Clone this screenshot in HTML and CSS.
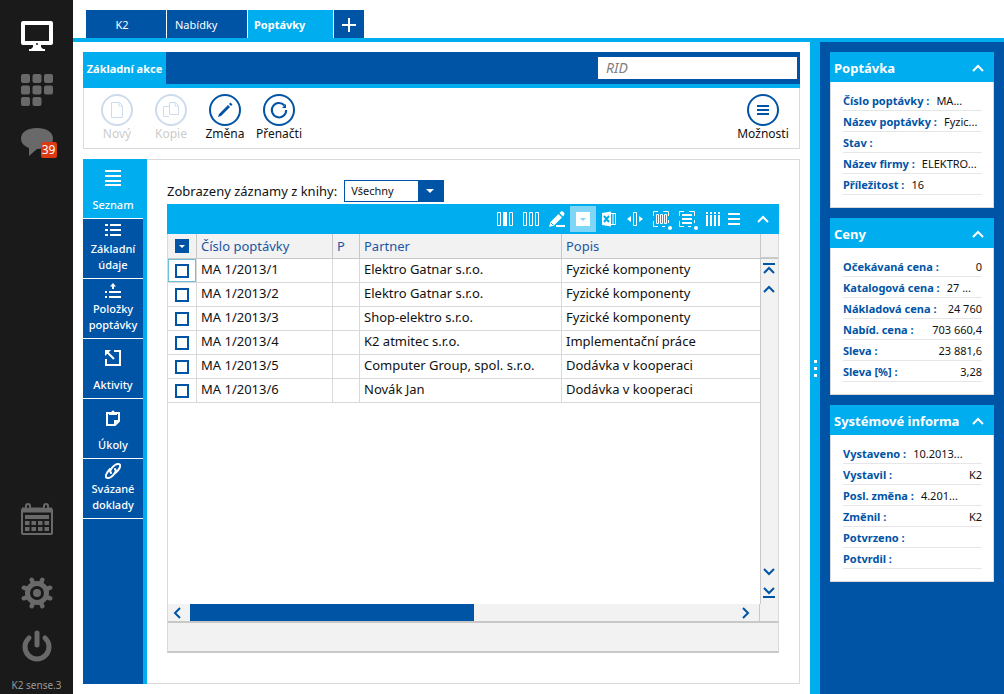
FILE: index.html
```html
<!DOCTYPE html>
<html lang="cs">
<head>
<meta charset="utf-8">
<title>K2 – Poptávky</title>
<link rel="stylesheet" href="styles.css">
</head>
<body>
<div class="app">
  <nav class="rail" aria-label="Hlavní panel">
    <a href="#" class="rail-link active" aria-label="Plocha">
      <svg width="32" height="32" viewBox="0 0 32 32"><path fill="currentColor" fill-rule="evenodd" d="M2 0h28a2 2 0 0 1 2 2v20a2 2 0 0 1-2 2H20v2l2 2h2v2H8v-2h2l2-2v-2H2a2 2 0 0 1-2-2V2a2 2 0 0 1 2-2zM4 4v16h24V4z"/><circle cx="16" cy="23" r="1" fill="#1a1a1a"/></svg>
    </a>
    <a href="#" class="rail-link" aria-label="Moduly">
      <svg width="32" height="32" viewBox="0 0 32 32" fill="currentColor"><rect width="9" height="9" rx="2"/><rect x="11.500" width="9" height="9" rx="2"/><rect x="23" width="9" height="9" rx="2"/><rect y="11.500" width="9" height="9" rx="2"/><rect x="11.500" y="11.500" width="9" height="9" rx="2"/><rect x="23" y="11.500" width="9" height="9" rx="2"/><rect y="23" width="9" height="9" rx="2"/><rect x="11.500" y="23" width="9" height="9" rx="2"/></svg>
    </a>
    <a href="#" class="rail-link" aria-label="Zprávy">
      <svg width="32" height="32" viewBox="0 0 32 32"><path fill="currentColor" d="M16 1c9 0 16 4 16 10.500S25 22 16 22l-8 7v-8C3 19 0 16 0 11.500 0 5 7 1 16 1z"/></svg>
      <span class="badge">39</span>
    </a>
    <a href="#" class="rail-link rail-calendar" aria-label="Kalendář">
      <svg width="32" height="32" viewBox="0 0 32 32" fill="none" stroke="currentColor" stroke-width="2"><rect x="1" y="6" width="30" height="25" rx="1"/><path stroke-width="5" d="M1 7h30"/><path stroke-width="4" d="M4 14h24"/><path stroke-width="4" stroke-dasharray="4.500 2" d="M4 20h24M4 26h24"/><path fill="#1a1a1a" d="M5 6V3a2 2 0 0 1 4 0v3zM23 6V3a2 2 0 0 1 4 0v3z"/></svg>
    </a>
    <a href="#" class="rail-link rail-gear" aria-label="Nastavení">
      <svg width="32" height="32" viewBox="0 0 32 32" fill="none" stroke="currentColor"><circle cx="16" cy="16" r="9.500" stroke-width="5"/><circle cx="16" cy="16" r="4" fill="currentColor" stroke="none"/><path stroke-width="4.500" stroke-linecap="round" d="M12.200 6.800l-1.500-4M19.800 6.800l1.500-4M25.200 12.200l4-1.500M25.200 19.800l4 1.500M19.800 25.200l1.500 4M12.200 25.200l-1.500 4M6.800 19.800l-4 1.500M6.800 12.200l-4-1.500"/></svg>
    </a>
    <a href="#" class="rail-link" aria-label="Odhlásit">
      <svg width="32" height="32" viewBox="0 0 32 32" fill="none" stroke="currentColor" stroke-width="5" stroke-linecap="round"><path d="M8 8a12 12 0 1 0 16 0M16 3v12"/></svg>
    </a>
    <span class="rail-version">K2 sense.3</span>
  </nav>

  <div class="workspace">
    <header class="tabs">
      <button class="tab tab-home">K2</button>
      <button class="tab">Nabídky</button>
      <button class="tab tab-active">Poptávky</button>
      <button class="tab tab-add" aria-label="Nová záložka"><svg width="14" height="14" viewBox="0 0 14 14"><path stroke="#fff" stroke-width="2" d="M7 0v14M0 7h14"/></svg></button>
    </header>

    <div class="body">
      <main class="main">
        <section class="ribbon">
          <div class="ribbon-head">
            <button class="ribbon-tab">Základní akce</button>
            <input class="rid" type="text" placeholder="RID" aria-label="RID">
          </div>
          <div class="actions">
            <button class="action" disabled><span class="disc"><svg width="28" height="28" viewBox="0 0 28 28"><path d="M8.500 6.500h8l3 3v12h-11zM16 7v3h3"/></svg></span>Nový</button>
            <button class="action" disabled><span class="disc"><svg width="28" height="28" viewBox="0 0 28 28"><path d="M12 20.500H6.500v-10H12M12.500 6.500h6l3 3v9h-9zM18 7v3h3"/></svg></span>Kopie</button>
            <button class="action"><span class="disc"><svg width="28" height="28" viewBox="0 0 28 28"><path class="solid" d="M7 21l1-3L17 9l2 2-9 9zM18 8l1.500-1.500 2 2L20 10z"/></svg></span>Změna</button>
            <button class="action"><span class="disc"><svg width="28" height="28" viewBox="0 0 28 28"><path class="thick" d="M19.500 9.500a7.200 7.200 0 1 0 1.700 4.500"/><path class="solid" d="M21 8v4h-4z"/></svg></span>Přenačti</button>
            <button class="action action-end"><span class="disc"><svg width="28" height="28" viewBox="0 0 28 28"><path class="thick" d="M8 10h12M8 14h12M8 18h12"/></svg></span>Možnosti</button>
          </div>
        </section>

        <section class="detail">
          <nav class="pages" aria-label="Stránky">
            <a href="#" class="page page-active"><svg width="16" height="16" viewBox="0 0 16 16"><path stroke-width="2" d="M0 1h16M0 6h16M0 11h16M0 15h16"/></svg><span>Seznam</span></a>
            <a href="#" class="page page-two"><svg width="16" height="14" viewBox="0 0 16 14"><path stroke-width="2" d="M0 2h3M5 2h11M0 7h3M5 7h11M0 12h3M5 12h11"/></svg><span>Základní údaje</span></a>
            <a href="#" class="page page-two"><svg width="16" height="16" viewBox="0 0 16 16"><path stroke-width="2" d="M0 9h2M4 9h12M0 14h2M4 14h12M8 6V2"/><path fill="#fff" stroke="none" d="M8 0l3 3.500H5z"/></svg><span>Položky poptávky</span></a>
            <a href="#" class="page"><svg width="16" height="16" viewBox="0 0 16 16"><path stroke-width="2" d="M9 1h6v14H1V9M2 2l7 7"/><path fill="#fff" stroke="none" d="M0 0h6L0 6z"/></svg><span>Aktivity</span></a>
            <a href="#" class="page"><svg width="16" height="16" viewBox="0 0 16 16"><path stroke-width="2" d="M2 3h12v8l-4 4H2z"/><path fill="#fff" stroke="none" d="M4 5V2h2.500a1.500 1.500 0 0 1 3 0H12v3zM9 10h5l-5 5z"/></svg><span>Úkoly</span></a>
            <a href="#" class="page page-two"><svg width="16" height="16" viewBox="0 0 16 16"><path stroke-width="2" stroke-linecap="round" d="M6 10C4 8 7 4 10 2s6-1 5 2-3 5-6 7M10 6c2 2-1 6-4 8s-6 1-5-2 2-4 4-6"/></svg><span>Svázané doklady</span></a>
          </nav>

          <div class="content">
            <div class="filter">
              <label for="book">Zobrazeny záznamy z knihy:</label>
              <span class="select-box">
                <select id="book"><option>Všechny</option></select>
                <svg class="select-arrow" width="8" height="4" viewBox="0 0 8 4"><path fill="#fff" d="M0 0h8L4 4z"/></svg>
              </span>
            </div>

            <div class="grid">
              <div class="grid-tools">
                <button aria-label="Sloupec"><svg width="20" height="20" viewBox="0 0 20 20"><path d="M2.500 3.500h3v13h-3zM14.500 3.500h3v13h-3z"/><path class="w" d="M8 3h4v14H8z"/></svg></button>
                <button aria-label="Sloupce"><svg width="20" height="20" viewBox="0 0 20 20"><path d="M2.500 3.500h3v13h-3zM8.500 3.500h3v13h-3zM14.500 3.500h3v13h-3z"/></svg></button>
                <button aria-label="Upravit"><svg width="20" height="20" viewBox="0 0 20 20"><path class="w" d="M2 18l1.500-5L11.500 5l3.500 3.500-8 8zM12.500 4L14 2.500q1-.8 2.500.5t.8 2.700L16 7.500zM9 16h9v2H9z"/><path stroke="#00aeef" d="M4 14l2 2"/></svg></button>
                <button class="on" aria-label="Filtr"><svg width="20" height="20" viewBox="0 0 20 20"><path class="w" d="M3 3h14v14H3z"/><path fill="#7fd6f7" stroke="none" d="M7 9h6l-3 3z"/></svg></button>
                <button aria-label="Excel"><svg width="20" height="20" viewBox="0 0 20 20"><path d="M11 4.500h5.500v11H11M14 5v10"/><path class="w" d="M3 4l9-1.500v15L3 16z"/><path stroke="#00aeef" stroke-width="2" d="M5 7l5 6M10 7l-5 6"/></svg></button>
                <button aria-label="Šířka sloupce"><svg width="20" height="20" viewBox="0 0 20 20"><path d="M8.500 3.500h3v13h-3z"/><path class="w" d="M2 10l4-3v6zM18 10l-4-3v6z"/></svg></button>
                <button aria-label="Nastavení sloupců"><svg width="20" height="20" viewBox="0 0 20 20"><path d="M2.500 7V2.500H7M12 2.500h5.500V7M2.500 12v5.500H7M11 17.500h3M17.500 11v3"/><path d="M5.500 5.500h2v9h-2zM9.500 5.500h2v9h-2zM13.500 5.500h2v9h-2z"/><circle class="w" cx="19" cy="19" r="2"/></svg></button>
                <button aria-label="Nastavení řádků"><svg width="20" height="20" viewBox="0 0 20 20"><path d="M2.500 7V2.500H7M12 2.500h5.500V7M2.500 12v5.500H7M11 17.500h3M17.500 11v3"/><path stroke-width="2" d="M5 6h10M5 10h10M5 14h10"/><circle class="w" cx="19" cy="19" r="2"/></svg></button>
                <button aria-label="Svislé čáry"><svg width="20" height="20" viewBox="0 0 20 20"><path stroke-width="2" d="M4 3v2M8 3v2M12 3v2M16 3v2M4 6v11M8 6v11M12 6v11M16 6v11"/></svg></button>
                <button class="narrow" aria-label="Nabídka"><svg width="16" height="20" viewBox="0 0 16 20"><path stroke-width="2" d="M2 5h12M2 10h12M2 15h12"/></svg></button>
                <button class="wide" aria-label="Sbalit"><svg width="12" height="8" viewBox="0 0 12 8"><path stroke-width="2" d="M1 7l5-5 5 5"/></svg></button>
              </div>

              <div class="grid-view">
                <div class="grid-rows">
                  <table class="records">
                    <colgroup><col class="c-check"><col class="c-number"><col class="c-flag"><col class="c-partner"><col></colgroup>
                    <thead>
                      <tr><th><button class="pick-all" aria-label="Výběr"><svg width="6" height="3" viewBox="0 0 6 3"><path fill="#fff" d="M0 0h6L3 3z"/></svg></button></th><th>Číslo poptávky</th><th>P</th><th>Partner</th><th>Popis</th></tr>
                    </thead>
                    <tbody>
                      <tr><td class="focus"><input type="checkbox" aria-label="MA 1/2013/1"></td><td>MA 1/2013/1</td><td></td><td>Elektro Gatnar s.r.o.</td><td>Fyzické komponenty</td></tr>
                      <tr><td><input type="checkbox" aria-label="MA 1/2013/2"></td><td>MA 1/2013/2</td><td></td><td>Elektro Gatnar s.r.o.</td><td>Fyzické komponenty</td></tr>
                      <tr><td><input type="checkbox" aria-label="MA 1/2013/3"></td><td>MA 1/2013/3</td><td></td><td>Shop-elektro s.r.o.</td><td>Fyzické komponenty</td></tr>
                      <tr><td><input type="checkbox" aria-label="MA 1/2013/4"></td><td>MA 1/2013/4</td><td></td><td>K2 atmitec s.r.o.</td><td>Implementační práce</td></tr>
                      <tr><td><input type="checkbox" aria-label="MA 1/2013/5"></td><td>MA 1/2013/5</td><td></td><td>Computer Group, spol. s.r.o.</td><td>Dodávka v kooperaci</td></tr>
                      <tr><td><input type="checkbox" aria-label="MA 1/2013/6"></td><td>MA 1/2013/6</td><td></td><td>Novák Jan</td><td>Dodávka v kooperaci</td></tr>
                    </tbody>
                  </table>
                </div>
                <div class="vscroll">
                  <div class="vscroll-head"></div>
                  <button aria-label="Na začátek"><svg width="12" height="12" viewBox="0 0 12 12"><path stroke-width="2" d="M0 1h12M1 10l5-5 5 5"/></svg></button>
                  <button aria-label="Nahoru"><svg width="12" height="8" viewBox="0 0 12 8"><path stroke-width="2" d="M1 7l5-5 5 5"/></svg></button>
                  <button class="push" aria-label="Dolů"><svg width="12" height="8" viewBox="0 0 12 8"><path stroke-width="2" d="M1 1l5 5 5-5"/></svg></button>
                  <button aria-label="Na konec"><svg width="12" height="12" viewBox="0 0 12 12"><path stroke-width="2" d="M0 11h12M1 2l5 5 5-5"/></svg></button>
                </div>
              </div>

              <div class="hscroll">
                <button aria-label="Vlevo"><svg width="8" height="12" viewBox="0 0 8 12"><path stroke-width="2" d="M7 1L2 6l5 5"/></svg></button>
                <div class="track"><div class="thumb"></div></div>
                <button aria-label="Vpravo"><svg width="8" height="12" viewBox="0 0 8 12"><path stroke-width="2" d="M1 1l5 5-5 5"/></svg></button>
                <div class="corner"></div>
              </div>
              <div class="grid-foot"></div>
            </div>
          </div>
        </section>
      </main>

      <div class="splitter"><i></i><i></i><i></i></div>

      <aside class="side">
        <section class="card">
          <button class="card-head"><span>Poptávka</span><svg width="12" height="8" viewBox="0 0 12 8"><path stroke="#fff" stroke-width="2" fill="none" d="M1 7l5-5 5 5"/></svg></button>
          <dl class="card-body start">
            <div><dt>Číslo poptávky :</dt><dd>MA...</dd></div>
            <div><dt>Název poptávky :</dt><dd>Fyzic...</dd></div>
            <div><dt>Stav :</dt><dd></dd></div>
            <div><dt>Název firmy :</dt><dd>ELEKTRO...</dd></div>
            <div><dt>Příležitost :</dt><dd>16</dd></div>
          </dl>
        </section>
        <section class="card">
          <button class="card-head"><span>Ceny</span><svg width="12" height="8" viewBox="0 0 12 8"><path stroke="#fff" stroke-width="2" fill="none" d="M1 7l5-5 5 5"/></svg></button>
          <dl class="card-body">
            <div><dt>Očekávaná cena :</dt><dd>0</dd></div>
            <div class="start"><dt>Katalogová cena :</dt><dd>27 ...</dd></div>
            <div><dt>Nákladová cena :</dt><dd>24 760</dd></div>
            <div><dt>Nabíd. cena :</dt><dd>703 660,4</dd></div>
            <div><dt>Sleva :</dt><dd>23 881,6</dd></div>
            <div><dt>Sleva [%] :</dt><dd>3,28</dd></div>
          </dl>
        </section>
        <section class="card">
          <button class="card-head"><span>Systémové informa</span><svg width="12" height="8" viewBox="0 0 12 8"><path stroke="#fff" stroke-width="2" fill="none" d="M1 7l5-5 5 5"/></svg></button>
          <dl class="card-body">
            <div class="start"><dt>Vystaveno :</dt><dd>10.2013...</dd></div>
            <div><dt>Vystavil :</dt><dd>K2</dd></div>
            <div class="start"><dt>Posl. změna :</dt><dd>4.201...</dd></div>
            <div><dt>Změnil :</dt><dd>K2</dd></div>
            <div><dt>Potvrzeno :</dt><dd></dd></div>
            <div><dt>Potvrdil :</dt><dd></dd></div>
          </dl>
        </section>
      </aside>
    </div>
  </div>
</div>
</body>
</html>
```
FILE: styles.css
```css
:root {
  --blue: #0054a6;
  --cyan: #00aeef;
  --line: #d9d9d9;
  --rule: #c8c8c8;
  --pale: #f2f2f2;
}
* { box-sizing: border-box; }
body {
  margin: 0;
  background: #fff;
  color: #111;
  font: 13px/16px "Noto Sans", "Open Sans", sans-serif;
}
button, input, select { font: inherit; color: inherit; margin: 0; }
button { border: 0; padding: 0; background: none; cursor: pointer; }
a { color: inherit; text-decoration: none; }
svg { display: block; flex: none; }

.app { display: flex; min-height: 100vh; }

/* Left rail */
.rail {
  flex: none;
  width: 73px;
  display: flex;
  flex-direction: column;
  align-items: center;
  gap: 21px;
  padding-top: 21px;
  background: #1a1a1a;
}
.rail-link { position: relative; color: #696969; }
.rail-link.active { color: #fff; }
.rail-calendar { margin-top: auto; }
.rail-gear { margin-top: 21px; }
.badge {
  position: absolute;
  left: 20px;
  top: 15px;
  min-width: 16px;
  height: 16px;
  border-radius: 2px;
  background: #dc3912;
  color: #fff;
  font-size: 12px;
  text-align: center;
}
.rail-version { color: #999; font-size: 10px; line-height: 12px; margin-bottom: 3px; margin-top: -4px; }

/* Document tabs */
.workspace { flex: 1; min-width: 0; display: flex; flex-direction: column; }
.tabs {
  display: flex;
  gap: 1px;
  padding: 10px 13px 0;
  border-bottom: 4px solid var(--cyan);
}
.tab {
  width: 80px;
  height: 28px;
  padding: 2px 8px 0;
  background: var(--blue);
  color: #fff;
  font-size: 11px;
  text-align: left;
}
.tab-home { padding-right: 16px; text-align: center; }
.tab-active { width: 85px; padding-left: 6px; background: var(--cyan); font-weight: 700; }
.tab-add { width: 30px; display: flex; align-items: center; justify-content: center; }

.body { flex: 1; display: flex; min-height: 0; }
.main { flex: 1; min-width: 0; display: flex; flex-direction: column; gap: 10px; padding: 10px; }

/* Ribbon */
.ribbon-head {
  display: flex;
  justify-content: space-between;
  height: 36px;
  background: linear-gradient(var(--blue) 32px, var(--cyan) 32px);
}
.ribbon-tab { width: 83px; padding-bottom: 2px; background: var(--cyan); color: #fff; font-size: 11px; font-weight: 700; white-space: nowrap; }
.rid {
  width: 199px;
  height: 22px;
  margin: 5px 3px 0;
  padding: 0 7px 2px;
  border: 1px solid #fff;
  border-radius: 0;
  background: #fff;
  font-size: 14px;
}
.rid::placeholder { color: #808080; font-style: italic; opacity: 1; }
.actions {
  display: flex;
  padding: 6px 9px 6px 6px;
  border: 1px solid var(--line);
  border-top: 0;
}
.action {
  width: 54px;
  display: flex;
  flex-direction: column;
  align-items: center;
  color: #111;
  font-size: 12px;
  white-space: nowrap;
}
.action:disabled { color: #ccc; }
.action:disabled .disc { color: #cddcec; }
.action-end { margin-left: auto; }
.disc {
  width: 32px;
  height: 32px;
  border: 2px solid;
  border-radius: 50%;
  color: var(--blue);
}
.disc path { fill: none; stroke: currentColor; }
.disc .solid { fill: currentColor; stroke: none; }
.disc .thick { stroke-width: 2; }

/* Page list */
.detail { flex: 1; display: flex; }
.pages { flex: none; width: 64px; border-right: 4px solid var(--cyan); background: var(--blue); }
.page {
  display: flex;
  flex-direction: column;
  align-items: center;
  justify-content: space-between;
  height: 60px;
  padding: 11px 2px 5px;
  border-bottom: 1px solid #fff;
  color: #fff;
  font-size: 11px;
  font-weight: 500;
  text-align: center;
}
.page-two { padding-top: 4px; padding-bottom: 5px; }
.page-active { background: var(--cyan); }
.page svg { fill: none; stroke: #fff; }

.content {
  flex: 1;
  min-width: 0;
  display: flex;
  flex-direction: column;
  gap: 2px;
  padding: 20px 20px 30px;
  border: 1px solid var(--line);
  border-left: 0;
}
.filter { display: flex; align-items: center; gap: 7px; }
.select-box { position: relative; }
.select-box select {
  display: block;
  appearance: none;
  width: 100px;
  height: 22px;
  padding: 0 6px;
  border: 1px solid var(--blue);
  border-radius: 0;
  background: linear-gradient(90deg, #fff 73px, var(--blue) 73px);
  font-size: 11px;
}
.select-arrow { position: absolute; right: 10px; top: 9px; pointer-events: none; }

/* Record grid */
.grid { flex: 1; display: flex; flex-direction: column; }
.grid-tools { display: flex; justify-content: flex-end; height: 30px; background: var(--cyan); }
.grid-tools button { width: 26px; display: flex; align-items: center; justify-content: center; }
.grid-tools .on { height: 26px; margin-top: 2px; background: #7fd6f7; }
.grid-tools .narrow { width: 16px; }
.grid-tools .wide { width: 32px; margin-left: 5px; }
.grid-tools svg { fill: none; stroke: #fff; overflow: visible; }
.grid-tools .w { fill: #fff; stroke: none; }

.grid-view { flex: 1; display: flex; border: 1px solid var(--line); border-width: 0 1px; }
.grid-rows { flex: 1; min-width: 0; border-right: 1px solid var(--rule); }
.records { width: 100%; table-layout: fixed; border-collapse: separate; border-spacing: 0; }
.c-check { width: 29px; }
.c-number { width: 136px; }
.c-flag { width: 27px; }
.c-partner { width: 202px; }
.records th, .records td {
  height: 24px;
  padding: 0 4px 3px;
  border-right: 1px solid var(--line);
  border-bottom: 1px solid var(--line);
  text-align: left;
  white-space: nowrap;
  overflow: hidden;
}
.records th { height: 25px; padding-bottom: 0; background: var(--pale); border-color: var(--rule); color: #1a56a5; font-weight: 400; }
.records tr > :last-child { border-right: 0; }
.records tr > :first-child { padding: 0; }
.records .focus { box-shadow: inset 0 0 0 1px #6cc0d8; }
.pick-all { display: flex; width: 14px; height: 14px; margin: 0 auto; align-items: center; justify-content: center; background: var(--blue); }
.records input { display: block; appearance: none; width: 14px; height: 14px; margin: 0 auto; border: 2px solid var(--blue); background: #fff; }
.records input:checked { background: var(--blue); }

.vscroll { flex: none; width: 17px; display: flex; flex-direction: column; align-items: center; padding-bottom: 2px; background: var(--pale); }
.vscroll-head { width: 100%; height: 25px; border-bottom: 2px solid var(--rule); }
.vscroll button { height: 20px; padding-right: 1px; }
.vscroll .push { margin-top: auto; }
.vscroll svg, .hscroll svg { fill: none; stroke: var(--blue); }

.hscroll { display: flex; height: 17px; border: 1px solid var(--line); border-width: 0 1px; background: var(--pale); }
.hscroll button { width: 22px; display: flex; align-items: center; justify-content: center; padding-right: 4px; }
.hscroll .track { flex: 1; }
.hscroll .thumb { width: 52%; height: 17px; background: var(--blue); }
.hscroll .corner { width: 19px; border-left: 1px solid var(--rule); }
.grid-foot { height: 32px; border: 1px solid var(--line); border-top: 2px solid var(--rule); border-bottom: 2px solid var(--rule); background: var(--pale); }

/* Splitter and side cards */
.splitter { flex: none; width: 10px; display: flex; flex-direction: column; align-items: center; justify-content: center; gap: 4px; background: var(--cyan); }
.splitter i { width: 3px; height: 3px; background: #fff; }
.side { flex: none; width: 184px; display: flex; flex-direction: column; gap: 10px; padding: 10px; background: var(--blue); }
.card-head {
  width: 100%;
  height: 30px;
  display: flex;
  align-items: center;
  justify-content: space-between;
  padding: 2px 10px 0 4px;
  background: var(--cyan);
  color: #fff;
  font-weight: 700;
  white-space: nowrap;
}
.card-body { margin: 0; padding: 8px 11px 12px 12px; border: 1px solid var(--line); border-top: 0; background: #fff; }
.card-body div {
  display: flex;
  justify-content: space-between;
  gap: 7px;
  height: 21px;
  line-height: 22px;
  border-bottom: 1px solid #e6e6e6;
  white-space: nowrap;
}
.card-body.start div, .card-body .start { justify-content: flex-start; }
.card-body dt { color: var(--blue); font-weight: 700; font-size: 11px; }
.card-body dd { margin: 0; font-size: 11px; }
```
